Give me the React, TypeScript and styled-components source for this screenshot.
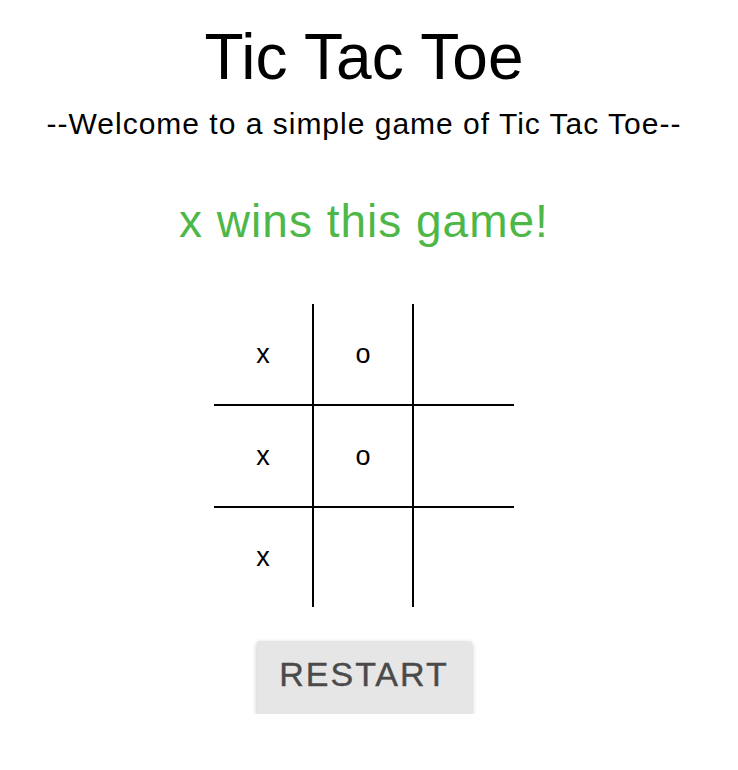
import React from "react";
import styled, { createGlobalStyle } from "styled-components";

const Global = createGlobalStyle`
  body {
    margin: 0;
    background: #fff;
    font-family: "Liberation Sans", Arial, sans-serif;
  }
`;

const Page = styled.div`
  display: flex;
  flex-direction: column;
  align-items: center;
  padding: 19px 10px 0 0;
`;

const Title = styled.h1`
  margin: 0;
  font-size: 64px;
  font-weight: 400;
  line-height: 76px;
  color: #000;
`;

const Subtitle = styled.p`
  margin: 11px 0 0;
  font-size: 30px;
  letter-spacing: 1px;
  line-height: 36px;
  color: #000;
`;

const Status = styled.h2`
  margin: 49px 0 0;
  font-size: 46px;
  font-weight: 400;
  letter-spacing: 1px;
  line-height: 60px;
  color: #4db848;
`;

const Board = styled.div`
  margin-top: 53px;
  display: grid;
  grid-template-columns: 100px 100px 100px;
  grid-template-rows: 102px 102px 99px;
`;

const Cell = styled.div<{ $right: boolean; $bottom: boolean }>`
  display: flex;
  align-items: center;
  justify-content: center;
  font-size: 27px;
  color: #000;
  border-right: ${(p) => (p.$right ? "2px solid #000" : "none")};
  border-bottom: ${(p) => (p.$bottom ? "2px solid #000" : "none")};
`;

const RestartButton = styled.button`
  margin-top: 34px;
  width: 215px;
  height: 73px;
  padding: 0 0 6px;
  border: none;
  border-radius: 2px;
  background: #e6e6e6;
  color: #4a4a4a;
  font-family: "Liberation Sans", Arial, sans-serif;
  font-size: 34px;
  letter-spacing: 2px;
  -webkit-text-stroke: 0.4px #4a4a4a;
  box-shadow: 0 2px 5px rgba(0, 0, 0, 0.26);
  cursor: pointer;
`;

const cells = ["x", "o", "", "x", "o", "", "x", "", ""];

export default function App() {
  return (
    <>
      <Global />
      <Page>
        <Title>Tic Tac Toe</Title>
        <Subtitle>--Welcome to a simple game of Tic Tac Toe--</Subtitle>
        <Status>x wins this game!</Status>
        <Board>
          {cells.map((c, i) => (
            <Cell key={i} $right={i % 3 !== 2} $bottom={i < 6}>
              {c}
            </Cell>
          ))}
        </Board>
        <RestartButton>RESTART</RestartButton>
      </Page>
    </>
  );
}
